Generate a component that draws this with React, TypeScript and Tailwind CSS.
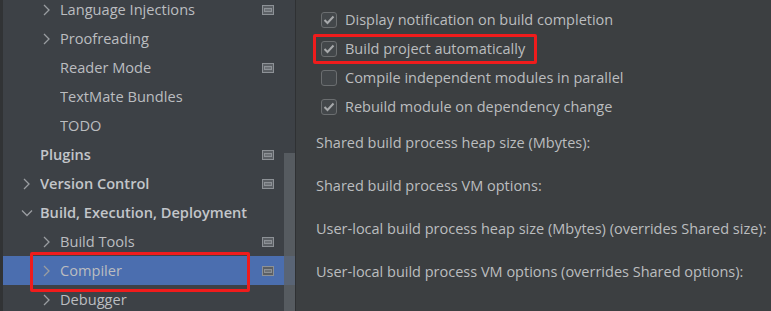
import React from "react";

type Item = {
  label: string;
  level: 1 | 2;
  bold?: boolean;
  arrow?: "right" | "down";
  page?: boolean;
  selected?: boolean;
};

const items: Item[] = [
  { label: "Language Injections", level: 2, arrow: "right", page: true },
  { label: "Proofreading", level: 2, arrow: "right" },
  { label: "Reader Mode", level: 2, page: true },
  { label: "TextMate Bundles", level: 2 },
  { label: "TODO", level: 2 },
  { label: "Plugins", level: 1, bold: true, page: true },
  { label: "Version Control", level: 1, bold: true, arrow: "right", page: true },
  { label: "Build, Execution, Deployment", level: 1, bold: true, arrow: "down" },
  { label: "Build Tools", level: 2, arrow: "right", page: true },
  { label: "Compiler", level: 2, arrow: "right", page: true, selected: true },
  { label: "Debugger", level: 2, arrow: "right" },
];

const checks = [
  { label: "Display notification on build completion", checked: true },
  { label: "Build project automatically", checked: true },
  { label: "Compile independent modules in parallel", checked: false },
  { label: "Rebuild module on dependency change", checked: true },
];

const fields = [
  "Shared build process heap size (Mbytes):",
  "Shared build process VM options:",
  "User-local build process heap size (Mbytes) (overrides Shared size):",
  "User-local build process VM options (overrides Shared options):",
];

function Chevron({ dir }: { dir: "right" | "down" }) {
  return (
    <svg width="12" height="12" viewBox="0 0 12 12" className="shrink-0">
      {dir === "right" ? (
        <path d="M3 1 L8 6 L3 11" fill="none" stroke="#9a9da1" strokeWidth="1.3" />
      ) : (
        <path d="M1 3.5 L6 8.5 L11 3.5" fill="none" stroke="#9a9da1" strokeWidth="1.3" />
      )}
    </svg>
  );
}

function PageIcon() {
  return (
    <svg width="12" height="10" viewBox="0 0 12 10" className="shrink-0">
      <rect x="0.5" y="0.5" width="11" height="9" fill="#5b5f64" stroke="#8d9196" />
      <rect x="2" y="3" width="8" height="4" fill="#8d9196" />
      <rect x="3" y="4" width="6" height="2" fill="#6e7277" />
    </svg>
  );
}

function TreeRow({ item }: { item: Item }) {
  const indent = item.level === 1 ? "pl-[18px]" : "pl-[38px]";
  return (
    <div
      className={`flex h-[29px] items-center pr-[21px] ${indent} ${
        item.selected ? "bg-[#4b6eaf]" : ""
      }`}
    >
      <div className="flex w-[19px] items-center">
        {item.arrow && <Chevron dir={item.arrow} />}
      </div>
      <span
        className={`flex-1 truncate text-[14.6px] ${
          item.bold ? "font-semibold text-[#c3c6ca]" : "text-[#bbbdc0]"
        }`}
      >
        {item.label}
      </span>
      {item.page && <PageIcon />}
    </div>
  );
}

function CheckBox({ checked }: { checked: boolean }) {
  return (
    <div className="flex h-[16px] w-[16px] shrink-0 items-center justify-center rounded-[3px] border border-[#6b6e70] bg-[#43474a]">
      {checked && (
        <svg width="12" height="10" viewBox="0 0 12 10">
          <path d="M1.5 5 L4.5 8 L10.5 1.5" fill="none" stroke="#a7a9ab" strokeWidth="2" />
        </svg>
      )}
    </div>
  );
}

export default function App() {
  return (
    <div
      className="flex h-[311px] w-[771px] overflow-hidden bg-[#3c3f41] text-[#bbbbbb]"
      style={{ fontFamily: '"Open Sans", "Noto Sans", sans-serif' }}
    >
      {/* Дерево настроек */}
      <aside className="relative w-[296px] shrink-0 border-l-[3px] border-r border-l-[#313335] border-r-[#2f3133] bg-[#3d4146]">
        <div className="-mt-[5px]">
          {items.map((it) => (
            <TreeRow key={it.label} item={it} />
          ))}
        </div>
        <div className="absolute right-0 top-[153px] h-[170px] w-[11px] bg-[#5d6166]/80" />
        <div className="absolute left-[27px] top-[252px] h-[40px] w-[220px] rounded-[2px] border-[3px] border-[#f01c1c]" />
      </aside>

      {/* Настройки компилятора */}
      <main className="relative flex-1 pl-[20px]">
        <div className="pl-[5px] pt-[5px]">
          {checks.map((c) => (
            <div key={c.label} className="flex h-[29px] items-center gap-[8px]">
              <CheckBox checked={c.checked} />
              <span className="whitespace-nowrap text-[14.5px] text-[#bbbdbf]">{c.label}</span>
            </div>
          ))}
        </div>
        <div>
          {fields.map((f) => (
            <div key={f} className="flex h-[43px] items-center whitespace-nowrap text-[14.5px] text-[#bbbdbf]">
              {f}
            </div>
          ))}
        </div>
        <div className="absolute left-[17px] top-[34px] h-[30px] w-[224px] rounded-[2px] border-[3px] border-[#f01c1c]" />
      </main>
    </div>
  );
}
